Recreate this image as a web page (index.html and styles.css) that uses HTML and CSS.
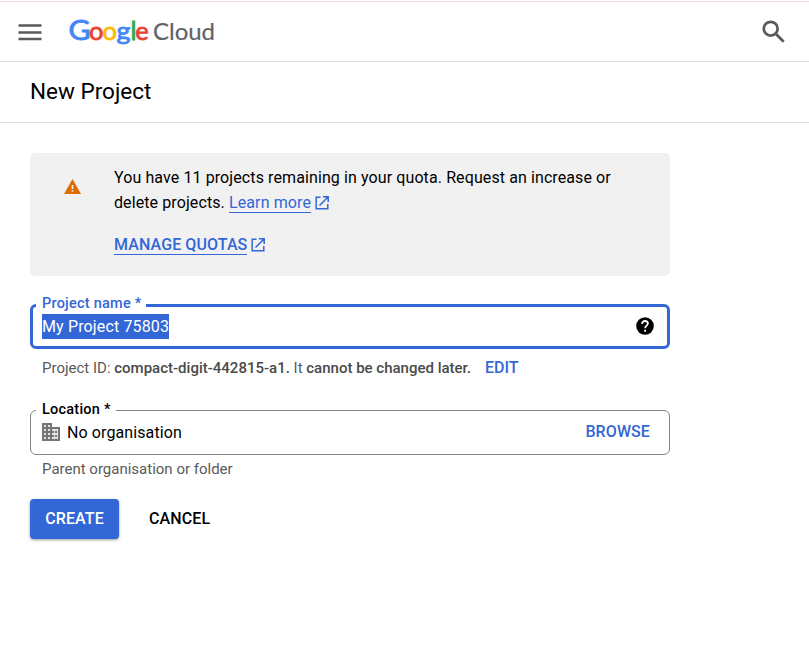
FILE: index.html
```html
<!DOCTYPE html>
<html lang="en">
<head>
<meta charset="utf-8">
<title>New Project – Google Cloud</title>
<link rel="stylesheet" href="styles.css">
</head>
<body>
<header class="topbar">
  <svg class="menu-icon" viewBox="0 0 24 17" aria-hidden="true"><path d="M.5 1.500h23M.5 8.500h23M.5 15h23"/></svg>
  <svg class="logo" viewBox="-4 -4 158 40" role="img" aria-label="Google Cloud">
    <g class="logo-google">
      <text x="-.5" y="25.500" fill="#4285f4" stroke="#4285f4" class="logo-cap" textLength="22" lengthAdjust="spacingAndGlyphs">G</text>
      <text x="20" y="25.500" fill="#ea4335" stroke="#ea4335" textLength="14.500" lengthAdjust="spacingAndGlyphs">o</text>
      <text x="33.600" y="25.500" fill="#fbbc05" stroke="#fbbc05" textLength="14.500" lengthAdjust="spacingAndGlyphs">o</text>
      <text x="47.500" y="25.500" fill="#4285f4" stroke="#4285f4" textLength="14" lengthAdjust="spacingAndGlyphs">g</text>
      <text x="61.400" y="25.500" fill="#34a853" stroke="#34a853">l</text>
      <text x="66.300" y="25.500" fill="#ea4335" stroke="#ea4335">e</text>
    </g>
    <text x="84" y="25.500" class="logo-cloud" textLength="62">Cloud</text>
  </svg>
  <svg class="search-icon" viewBox="0 0 24 24" aria-hidden="true"><circle cx="8.700" cy="8.700" r="6.900"/><path d="M13.500 13.500l8.200 8.200"/></svg>
</header>
<div class="titlebar"><h1>New Project</h1></div>
<main>
  <section class="notice">
    <svg class="warn-icon" viewBox="0 0 17 15" aria-hidden="true"><path fill="#e06c00" d="M8.500 0L17 15H0z"/><path fill="#f1f1f1" d="M7.700 6h1.600v4H7.700zM7.700 11.200h1.600v1.600H7.700z"/></svg>
    <div class="notice-body">
      <p>You have 11 projects remaining in your quota. Request an increase or<br>delete projects. <a class="link">Learn more</a><svg class="open-icon" viewBox="0 0 14 14" aria-hidden="true"><path d="M5.500 1.200H1.200v11.600h11.600V8M8 .8h5.200V6M13 1L4.500 9.500"/></svg></p>
      <p class="manage"><a class="link">MANAGE QUOTAS</a><svg class="open-icon" viewBox="0 0 14 14" aria-hidden="true"><path d="M5.500 1.200H1.200v11.600h11.600V8M8 .8h5.200V6M13 1L4.500 9.500"/></svg></p>
    </div>
  </section>
  <fieldset class="field field-focus">
    <legend>Project name *</legend>
    <div class="field-row">
      <span class="selected">My Project 75803</span>
      <svg class="help-icon" viewBox="0 0 18 18" aria-hidden="true"><circle cx="9" cy="9" r="8.800"/><path d="M6.100 6.900C6.100 5 7.300 4 9 4s2.900 1.100 2.900 2.600C11.900 8.600 9.100 8.700 9.100 11.200M9.100 12.800v1.900"/></svg>
    </div>
  </fieldset>
  <div class="hint project-id"><span>Project ID: <b>compact-digit-442815-a1.</b> It <b>cannot be changed later.</b></span><a class="edit">EDIT</a></div>
  <fieldset class="field field-plain">
    <legend>Location *</legend>
    <div class="field-row">
      <svg class="org-icon" viewBox="0 0 18 18" aria-hidden="true"><path fill="#757575" d="M0 0h10v4h8v14H0z"/><path fill="#e2e2e2" d="M2 2h2v2H2zM6 2h2v2H6zM2 6h2v2H2zM6 6h2v2H6zM2 10h2v2H2zM6 10h2v2H6zM2 14h2v2H2zM6 14h2v2H6zM10 6h6v10h-6v-2h2v-2h-2v-2h2V8h-2z"/><path fill="#757575" d="M13 8h2v2h-2zM13 12h2v2h-2z"/></svg>
      <span class="value">No organisation</span>
      <a class="browse">BROWSE</a>
    </div>
  </fieldset>
  <div class="hint parent">Parent organisation or folder</div>
  <div class="actions"><button class="create">CREATE</button><button class="cancel">CANCEL</button></div>
</main>
</body>
</html>
```

FILE: styles.css
```css
* { box-sizing: border-box; }
body { margin: 0; padding-top: 1px; background: #fff; color: #000; font: 16px/25px Roboto, sans-serif; letter-spacing: .1px; }
p, h1 { margin: 0; }
svg { display: block; flex: none; fill: none; }

.topbar { display: flex; align-items: flex-start; height: 61px; padding: 0 23px 0 18px; border-top: 1px solid #fadcda; border-bottom: 1px solid #dedede; }
.menu-icon { width: 24px; height: 17px; margin-top: 22px; stroke: #5a5a5a; stroke-width: 2.3; }
.logo { width: 158px; height: 40px; margin: 8px 0 0 23px; }
.logo text { font-family: Lato, sans-serif; letter-spacing: 0; }
.logo-google { font-size: 25.5px; font-weight: 400; stroke-width: .8; }
.logo-google .logo-cap { font-size: 27px; }
.logo-cloud { font-size: 24px; fill: #5f6368; stroke: #5f6368; stroke-width: .2; }
.search-icon { width: 24px; height: 24px; margin: 18px 0 0 auto; stroke: #5a5a5a; stroke-width: 2.7; }

.titlebar { height: 61px; padding: 14px 30px; border-bottom: 1px solid #dedede; }
h1 { font-size: 22.5px; line-height: 30px; font-weight: 400; letter-spacing: 0; }

main { width: 700px; padding: 30px; }
.notice { display: flex; height: 123px; padding: 12px 0 0 34px; border-radius: 5px; background: #f1f1f1; }
.warn-icon { width: 17px; height: 15px; margin-top: 14px; }
.notice-body { margin-left: 33px; white-space: nowrap; }
.manage { margin-top: 17px; font-weight: 500; }
.link { color: #3367d6; display: inline-block; line-height: 18px; border-bottom: 1px solid #3367d6; }
.open-icon { display: inline-block; width: 14px; height: 14px; margin-left: 4px; vertical-align: -2px; stroke: #3367d6; stroke-width: 1.5; }

.field { margin: 0; min-width: 0; border-radius: 6px; }
.field legend { font-size: 14.5px; font-weight: 500; letter-spacing: .23px; line-height: 0; white-space: nowrap; padding: 0 0 0 6px; }
.field-row { display: flex; align-items: center; }
.field-focus { height: 45px; margin-top: 28px; padding: 0 13px 0 3px; border: 3px solid #3367d6; }
.field-focus legend { width: 110px; height: 3px; color: #3367d6; }
.field-focus .field-row { margin: 7px 0 0 6px; }
.selected { background: #3367d6; color: #fff; letter-spacing: .14px; }
.help-icon { width: 18px; height: 18px; margin: 0 0 1px auto; }
.help-icon circle { fill: #000; }
.help-icon path { stroke: #fff; stroke-width: 1.8; }
.hint { padding-left: 12px; font-size: 15px; line-height: 20px; letter-spacing: 0; color: #5a5a5a; }
.hint b { font-weight: 500; color: #4a4a4a; }
.project-id { display: flex; height: 20px; margin-top: 9px; }
.project-id span { line-height: 21px; }
.edit { margin-left: 14px; color: #3367d6; font-size: 16px; font-weight: 500; line-height: 19px; }
.field-plain { height: 45px; margin-top: 32px; padding: 0 19px 0 5px; border: 1px solid #80868b; }
.field-plain legend { width: 80px; height: 1px; }
.field-plain .field-row { margin: 9px 0 0 6px; }
.org-icon { width: 18px; height: 18px; margin-bottom: 1px; }
.value { margin-left: 7px; }
.browse { margin-left: auto; padding-bottom: 2px; line-height: 23px; color: #3367d6; font-weight: 500; }
.parent { margin-top: 4px; line-height: 21px; height: 20px; }
.actions { display: flex; gap: 30px; margin-top: 20px; }
button { height: 40px; padding: 0; border: 0; border-radius: 4px; background: none; font: 500 16px/38px Roboto, sans-serif; letter-spacing: .1px; }
.create { width: 89px; background: #3367d6; color: #fff; box-shadow: 0 1px 3px rgba(0,0,0,.4); }
```
